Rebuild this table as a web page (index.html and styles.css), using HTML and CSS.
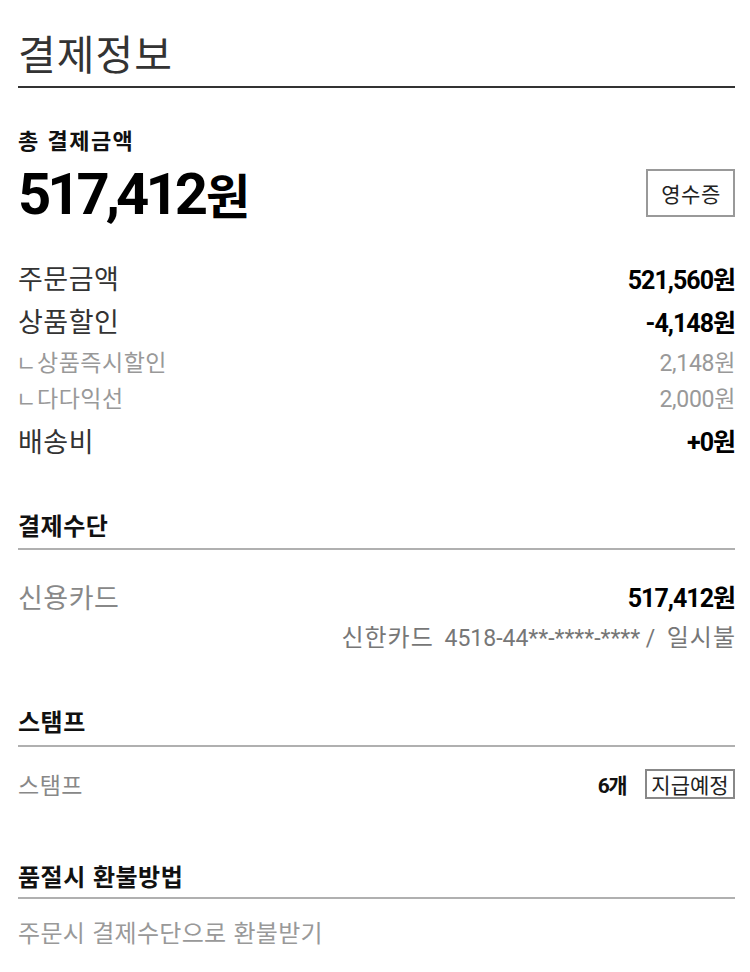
FILE: index.html
```html
<!DOCTYPE html>
<html lang="ko">
<head>
<meta charset="utf-8">
<title>결제정보</title>
<link rel="stylesheet" href="styles.css">
</head>
<body>
<div class="page">
  <h1 class="title">결제정보</h1>

  <section class="total">
    <div class="total-label">총 결제금액</div>
    <div class="total-row">
      <div class="total-amount"><span class="num">517,412</span><span class="won">원</span></div>
      <button class="receipt" type="button">영수증</button>
    </div>
  </section>

  <section class="breakdown">
    <div class="row main">
      <span class="label">주문금액</span>
      <span class="value strong">521,560원</span>
    </div>
    <div class="row main">
      <span class="label">상품할인</span>
      <span class="value strong">-4,148원</span>
    </div>
    <div class="row sub sub1">
      <span class="label"><span class="corner">ㄴ</span>상품즉시할인</span>
      <span class="value">2,148원</span>
    </div>
    <div class="row sub sub2">
      <span class="label"><span class="corner">ㄴ</span>다다익선</span>
      <span class="value">2,000원</span>
    </div>
    <div class="row main ship">
      <span class="label">배송비</span>
      <span class="value strong">+0원</span>
    </div>
  </section>

  <section class="block pay">
    <h2 class="block-title">결제수단</h2>
    <div class="row pay-row">
      <span class="label gray">신용카드</span>
      <span class="value strong">517,412원</span>
    </div>
    <div class="card-detail"><span class="ko card-name">신한카드</span> <span class="num-r">4518-44**-****-****</span> /&nbsp;&nbsp;<span class="ko">일시불</span></div>
  </section>

  <section class="block stamp">
    <h2 class="block-title">스탬프</h2>
    <div class="row stamp-row">
      <span class="label small gray">스탬프</span>
      <span class="stamp-right"><span class="count">6개</span><span class="tag">지급예정</span></span>
    </div>
  </section>

  <section class="block refund">
    <h2 class="block-title">품절시 환불방법</h2>
    <div class="refund-text">주문시 결제수단으로 환불받기</div>
  </section>
</div>
</body>
</html>
```

FILE: styles.css
```css
* { box-sizing: border-box; }

html, body {
  margin: 0;
  padding: 0;
  background: #fff;
}

body {
  font-family: Roboto, "Noto Sans CJK KR", sans-serif;
  color: #333;
}

.page {
  padding: 0 15px 0 18px;
}

.title {
  margin: 0;
  padding-top: 18px;
  height: 88px;
  line-height: 68px;
  font-size: 41px;
  font-weight: 400;
  color: #333;
  font-family: "Noto Sans CJK KR", sans-serif;
  letter-spacing: 1px;
  border-bottom: 2px solid #333;
}

.total {
  padding-top: 39px;
}

.total-label {
  height: 24px;
  font-family: "Noto Sans CJK KR", sans-serif;
  font-size: 22px;
  font-weight: 700;
  line-height: 24px;
  letter-spacing: 1.5px;
  color: #111;
}

.total-row {
  margin-top: 15px;
  height: 54px;
  display: flex;
  align-items: center;
  justify-content: space-between;
}

.total-amount {
  font-weight: 700;
  color: #000;
  line-height: 54px;
  display: flex;
  align-items: baseline;
}

.total-amount .num {
  font-family: Roboto, sans-serif;
  font-size: 58px;
  letter-spacing: -4px;
}

.total-amount .won {
  font-family: "Noto Sans CJK KR", sans-serif;
  font-size: 48px;
  margin-left: 2px;
}

.receipt {
  width: 89px;
  height: 48px;
  border: 2px solid #999;
  background: #fff;
  padding: 0 0 0 1px;
  font-family: "Noto Sans CJK KR", sans-serif;
  font-size: 21px;
  letter-spacing: 0.5px;
  color: #222;
  cursor: pointer;
}

.breakdown {
  padding-top: 36px;
}

.row {
  display: flex;
  align-items: center;
  justify-content: space-between;
}

.label {
  font-family: "Noto Sans CJK KR", sans-serif;
}

.row.main {
  height: 43px;
}

.row.main .label {
  font-size: 27px;
  letter-spacing: 0.5px;
  color: #333;
}

.value {
  font-family: Roboto, "Noto Sans CJK KR", sans-serif;
}

.value.strong {
  font-size: 25px;
  font-weight: 700;
  color: #000;
  letter-spacing: -1px;
}

.row.sub1 { height: 37px; }
.row.sub2 { height: 35px; }

.row.sub .label {
  font-size: 23px;
  letter-spacing: 0.5px;
  color: #999;
}

.row.sub .corner {
  display: inline-block;
  width: 21px;
  margin-left: -2px;
  font-size: 22px;
  letter-spacing: 0;
}

.row.sub .value {
  font-size: 23px;
  color: #999;
  letter-spacing: -0.3px;
}

.row.ship {
  margin-top: 4px;
  height: 44px;
}

.block-title {
  margin: 0;
  font-family: "Noto Sans CJK KR", sans-serif;
  font-size: 24px;
  font-weight: 700;
  line-height: 26px;
  letter-spacing: 0.5px;
  color: #111;
  border-bottom: 2px solid #b0b0b0;
}

.pay {
  padding-top: 50px;
}

.pay .block-title {
  height: 38px;
  padding-bottom: 10px;
}

.row .label.gray,
.gray { color: #888; }

.pay-row {
  margin-top: 26px;
  height: 40px;
}

.pay-row .label {
  font-size: 27px;
  letter-spacing: 0.5px;
}

.card-detail {
  margin-top: 2px;
  height: 36px;
  line-height: 36px;
  text-align: right;
  font-family: Roboto, "Noto Sans CJK KR", sans-serif;
  font-size: 23px;
  color: #777;
  white-space: nowrap;
}

.card-detail .ko {
  font-family: "Noto Sans CJK KR", sans-serif;
  font-size: 24px;
  letter-spacing: 1px;
}

.card-detail .card-name {
  margin-right: 5px;
}

.card-detail .ko:last-child {
  margin-right: -1px;
}

.card-detail .num-r {
  font-family: Roboto, sans-serif;
}

.stamp {
  padding-top: 54px;
}

.stamp .block-title {
  height: 39px;
  padding-bottom: 13px;
}

.stamp-row {
  margin-top: 21px;
  height: 32px;
}

.label.small {
  font-size: 23px;
  letter-spacing: 0.5px;
}

.stamp-right {
  display: flex;
  align-items: center;
  gap: 19px;
}

.count {
  font-family: Roboto, "Noto Sans CJK KR", sans-serif;
  font-weight: 700;
  font-size: 21px;
  letter-spacing: -1.5px;
  color: #111;
}

.tag {
  display: inline-block;
  width: 90px;
  height: 30px;
  line-height: 26px;
  border: 2px solid #888;
  text-align: center;
  font-family: "Noto Sans CJK KR", sans-serif;
  font-size: 21px;
  letter-spacing: 0;
  color: #222;
  white-space: nowrap;
}

.refund {
  padding-top: 63px;
}

.refund .block-title {
  height: 36px;
  padding-bottom: 10px;
}

.refund-text {
  margin-top: 17px;
  line-height: 32px;
  font-family: "Noto Sans CJK KR", sans-serif;
  font-size: 24px;
  letter-spacing: 0.3px;
  color: #999;
}
```
